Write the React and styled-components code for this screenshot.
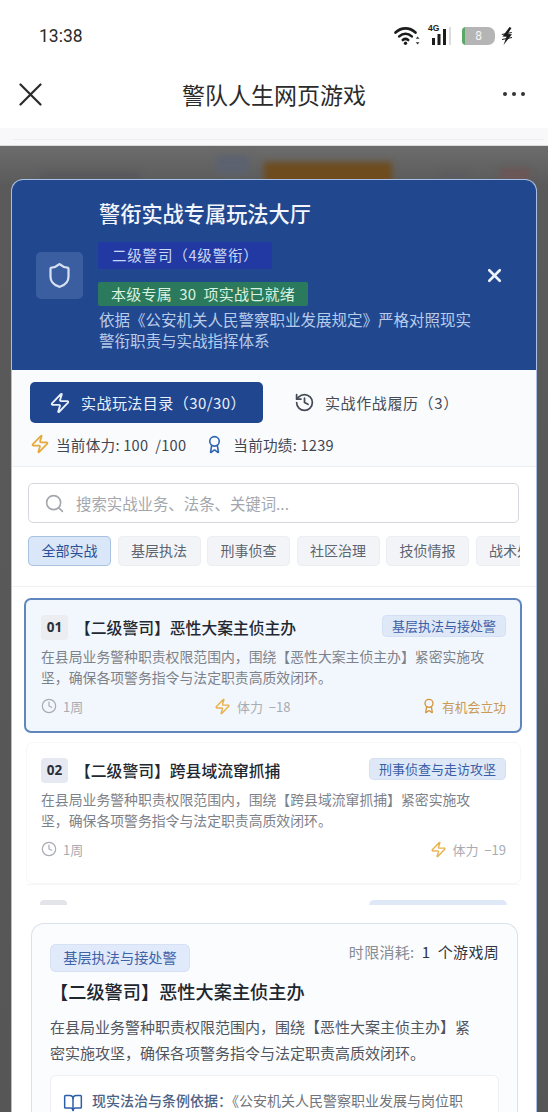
import React from "react";
import styled, { createGlobalStyle } from "styled-components";
import { Zap, History, Award, Search, Clock, BookOpen, Shield, X } from "lucide-react";

const Global = createGlobalStyle`
  html, body { margin: 0; padding: 0; background: #fff; }
  * { box-sizing: border-box; }
  body { font-family: "Noto Sans CJK SC", "Noto Sans", sans-serif; }
`;

const Page = styled.div`
  width: 548px; height: 1112px; overflow: hidden;
  display: flex; flex-direction: column; background: #fff;
`;
const StatusBar = styled.div`
  height: 70px; padding: 1px 34px 0 39px; flex: none; display: flex; align-items: center; justify-content: space-between;
`;
const Time = styled.span`
  font: 400 17.5px "Roboto", "Liberation Sans", sans-serif; color: #2a2a2a;
`;
const StatusIcons = styled.div`display: flex; align-items: center;`;
const NavBar = styled.div`
  height: 58px; flex: none; display: flex; align-items: center; justify-content: space-between;
  padding: 0 23px 10px 19px; position: relative;
`;
const NavTitle = styled.div`
  position: absolute; left: 0; right: 0; top: 8px; text-align: center;
  font-size: 23px; line-height: 32px; color: #2b2b2b;
`;
const Dots = styled.div`display: flex; gap: 5px;`;
const Dot = styled.i`width: 4px; height: 4px; border-radius: 50%; background: #333;`;
const Strip = styled.div`
  height: 18px; flex: none; background: #f8f8fa; border-bottom: 1px solid #dcdcdc;
  display: flex; align-items: flex-end; padding: 0 4px 5px 13px;
`;
const StripLine = styled.div`height: 1px; flex: 1; background: #eeeef1;`;
const Backdrop = styled.div`
  flex: 1; min-height: 0; background: linear-gradient(#6c6c6c, #5a5a5a 40px, #565656); padding: 34px 12px 0; position: relative; overflow: hidden;
  display: flex;
`;
const Blob = styled.div`
  position: absolute; top: ${p => p.$top}px; left: ${p => p.$left}px;
  width: ${p => p.$w}px; height: ${p => p.$h}px; background: ${p => p.$c}; filter: blur(3px);
`;
const Modal = styled.div`
  position: relative; flex: 1; display: flex; flex-direction: column; min-height: 0;
  background: #fff; border-radius: 11px 11px 0 0; overflow: hidden;
  box-shadow: 0 0 0 1px #a9c0e6;
`;
const Header = styled.header`
  height: 190px; flex: none; background: #21488f; color: #fff;
  display: flex; align-items: flex-start; padding: 18px 26px 0 24px; position: relative;
`;
const ShieldBox = styled.div`
  width: 47px; height: 47px; margin-top: 54px; flex: none; border-radius: 5px;
  background: #3a5e9f; display: flex; align-items: center; justify-content: center;
  color: #d6e0f2;
`;
const HeaderBody = styled.div`
  margin-left: 15px; flex: 1; min-width: 0; display: flex; flex-direction: column; align-items: flex-start;
`;
const HeaderTitle = styled.h1`
  margin: 0 0 15px; padding-left: 1px; font-size: 21.2px; line-height: 29px; font-weight: 500; color: #f2f5fb; white-space: nowrap;
`;
const RankBadge = styled.div`
  height: 27px; width: 174px; padding-left: 14px; border-radius: 2px; background: #2239a3;
  font-size: 14.5px; letter-spacing: .8px; line-height: 26px; color: #c9d6f5; white-space: nowrap;
`;
const ReadyBadge = styled.div`
  margin-top: 13px; height: 24px; padding: 0 13px; width: 210px; border-radius: 2px; background: #2b7a5d;
  font-size: 15px; letter-spacing: .25px; line-height: 24px; color: #d8f2df; white-space: pre;
`;
const HeaderDesc = styled.p`
  margin: 3px 0 0 1px; font-size: 15.5px; line-height: 21px; color: #b9cbea; white-space: pre;
`;
const CloseBtn = styled.div`
  position: absolute; right: 31px; top: 85px; color: #eef2fa; display: flex;
`;
const TabArea = styled.div`
  height: 97px; flex: none; background: #fafbfd; border-bottom: 1px solid #eceef2;
  padding: 12px 18px 0;
`;
const Tabs = styled.div`display: flex; align-items: center;`;
const ActiveTab = styled.div`
  width: 233px; height: 41px; border-radius: 5px; background: #1f468f; color: #eaf0fa;
  display: flex; align-items: center; padding-left: 19px; gap: 10px;
  font-size: 15px; letter-spacing: .45px; white-space: nowrap;
`;
const PlainTab = styled.div`
  margin-left: 31px; display: flex; align-items: center; gap: 10px; color: #454c58; font-size: 15px; letter-spacing: .6px; white-space: nowrap;
`;
const Stats = styled.div`
  margin-top: 9px; display: flex; align-items: center; height: 24px; color: #3f4651; font-size: 14.6px; letter-spacing: .25px;
`;
const Stat = styled.span`
  display: flex; align-items: center; gap: ${p => p.$gap}px; margin-right: ${p => p.$mr || 0}px; white-space: pre;
`;
const Filter = styled.div`
  height: 120px; flex: none; background: #fff; border-bottom: 1px solid #eff1f4;
  padding: 16px 16px 0;
`;
const SearchBox = styled.div`
  width: 491px; height: 40px; border: 1.5px solid #d5d8dd; border-radius: 5px;
  display: flex; align-items: center; padding-left: 15px; gap: 11px; color: #a3a7ad; font-size: 15.4px;
`;
const Chips = styled.div`
  margin-top: 13px; width: 492px; overflow: hidden; display: flex; gap: 6.5px;
`;
const Chip = styled.div`
  flex: none; width: 83px; height: 30px; border-radius: 5px; text-align: center;
  font-size: 14px; line-height: 29px;
  color: ${p => p.$on ? "#2a5197" : "#5b6470"};
  background: ${p => p.$on ? "#d9e7f8" : "#f3f4f7"};
  box-shadow: inset 0 0 0 1px ${p => p.$on ? "#a9c2e2" : "#eceef2"};
`;
const List = styled.div`
  flex: 1; min-height: 0; overflow: hidden; padding: 11px 14px 0 12px; background: #fff;
`;
const Card = styled.article`
  margin: ${p => p.$sel ? "0 0 9px" : "0 1px 0 2px"};
  height: ${p => p.$sel ? 135 : 142}px;
  padding: ${p => p.$sel ? "15px 14px 0 15px" : "15px 14px 0 14px"};
  border-radius: 7px;
  background: ${p => p.$sel ? "#f2f7fd" : "#fff"};
  border: ${p => p.$sel ? "2px solid #5f87bd" : "1px solid #f6f7f9"};
`;
const CardHead = styled.div`display: flex; align-items: flex-start;`;
const Num = styled.div`
  width: 27px; height: 25px; flex: none; border-radius: 4px; background: ${p => p.$sel ? "#ecedf1" : "#e6e9f2"};
  text-align: center; font: 700 13.5px/25px "Noto Sans", sans-serif; color: #29303a;
`;
const CardTitle = styled.h3`
  margin: 0 0 0 7px; flex: 1; font-size: 15.8px; line-height: 25px; font-weight: 500; color: #222831; white-space: nowrap;
`;
const Tag = styled.div`
  flex: none; height: 22px; padding: 0 10px; border-radius: 5px;
  background: #dfe8f7; color: #3a5ea6; font-size: 13px; line-height: 21px;
  box-shadow: inset 0 0 0 1px #d5e0f2;
`;
const CardDesc = styled.p`
  margin: 6px 0 0; font-size: 13.85px; line-height: 21px; color: #7d828a; height: 42px; white-space: pre;
`;
const CardFoot = styled.div`
  margin-top: 8px; display: flex; align-items: center; justify-content: space-between; height: 20px;
  font-size: 13px; color: #a8abb1;
`;
const Meta = styled.span`display: flex; align-items: center; gap: ${p => p.$gap || 6}px; color: ${p => p.$c || "#a8abb1"}; white-space: pre;`;
const AwardText = styled.span`font-size: 12.8px;`;
const PeekCard = styled.div`
  margin: 0 1px 0 2px; height: 60px; padding: 15px 14px 0 14px; border-top: 1px solid #f6f7f9;
  display: flex; justify-content: space-between;
`;
const PeekNum = styled.div`width: 27px; height: 25px; background: #e2e4ea; border-radius: 4px;`;
const PeekTag = styled.div`width: 138px; height: 22px; background: #dfe8f7; border-radius: 5px;`;
const DetailWrap = styled.div`
  height: 207px; flex: none; position: relative; background: #fff; padding: 18px 18px 0 19px;
`;
const Detail = styled.section`
  height: 200px; border: 1.5px solid #d9e1ea; border-radius: 13px 13px 0 0; border-bottom: 0; background: #fbfcfe;
  padding: 20px 18px 0 18px;
`;
const DetailHead = styled.div`display: flex; justify-content: space-between; align-items: flex-start;`;
const DetailTag = styled.div`
  width: 140px; height: 28px; border-radius: 6px; background: #e1eafa; text-align: center;
  color: #3f63a8; font-size: 14.2px; line-height: 27px; box-shadow: inset 0 0 0 1px #d6e1f3;
`;
const Duration = styled.div`
  font-size: 15px; letter-spacing: .3px; line-height: 15px; color: #878c93; white-space: pre;
  b { font-weight: 400; color: #2f353e; }
`;
const DetailTitle = styled.h2`
  margin: 4px 0 0; font-size: 18.2px; line-height: 30px; font-weight: 500; color: #20262e; white-space: nowrap;
`;
const DetailDesc = styled.p`
  margin: 8px 0 0; font-size: 15px; line-height: 26px; color: #50565f; white-space: pre;
`;
const LawBox = styled.div`
  margin-top: 9px; height: 60px; border: 1px solid #eef0f4; border-radius: 6px; background: #fff;
  display: flex; align-items: flex-start; padding: 14px 0 0 12px; gap: 9px;
  font-size: 14px; line-height: 20px; color: #6f747c; white-space: pre;
  b { font-weight: 500; color: #4c6285; }
`;
const SignalWrap = styled.div`position: relative; width: 27px; height: 20px; margin-left: 7px;`;
const SignalText = styled.span`
  position: absolute; left: 0; top: -3px; font: 700 8.5px/10px "Liberation Sans", sans-serif; color: #1c1c1c;
`;
const Battery = styled.div`
  margin-left: 7px; width: 33px; height: 18px; border-radius: 4px 7px 7px 4px;
  background: linear-gradient(90deg, #5aa866 0 3px, #b5b5b5 3px); color: #f4f4f4;
  font: 400 12px/18px "Roboto", sans-serif; text-align: center;
`;

const WifiIcon = () => (
  <svg width="26" height="20" viewBox="0 0 26 20" fill="none" stroke="#1c1c1c" strokeWidth="2.6" strokeLinecap="round" style={{ marginRight: 1 }}>
    <path d="M1.5 6.5C7.5 1 15.5 1 21.5 6.5" />
    <path d="M5.2 10.4c3.8-3.4 8.8-3.4 12.6 0" />
    <path d="M8.8 14c1.6-1.3 3.8-1.3 5.4 0" />
    <circle cx="11.5" cy="17.2" r="1.7" fill="#1c1c1c" stroke="none" />
    <path d="M23.6 10.5l-1.9 2.3h3.8zM23.6 18.5l-1.9-2.3h3.8z" fill="#333" stroke="none" />
  </svg>
);
const SignalIcon = () => (
  <SignalWrap>
    <SignalText>4G</SignalText>
    <svg width="27" height="20" viewBox="0 0 27 20">
      <rect x="4" y="12" width="3" height="7" fill="#1c1c1c" />
      <rect x="9.5" y="8" width="3" height="11" fill="#1c1c1c" />
      <rect x="15" y="3" width="3" height="16" fill="#1c1c1c" />
      <rect x="21" y="1" width="2" height="18" fill="#dcdcdc" />
    </svg>
  </SignalWrap>
);
const BoltIcon = () => (
  <svg width="14" height="20" viewBox="0 0 14 20" style={{ marginLeft: 5 }}>
    <path d="M9.5 1L2.5 10.5l4 .2L3.5 19l8.5-10.8-4.3-.1L11.5 2z" fill="#1c1c1c" />
    <path d="M1.8 8.5l10-2M2 13.5l10-2" stroke="#1c1c1c" strokeWidth="1" />
  </svg>
);
const NavClose = () => (
  <svg width="23" height="23" viewBox="0 0 23 23" fill="none" stroke="#2a2a2a" strokeWidth="2.2" strokeLinecap="round">
    <path d="M1.5 1.5l20 20M21.5 1.5l-20 20" />
  </svg>
);

const descA = "在县局业务警种职责权限范围内，围绕【恶性大案主侦主办】紧密实施攻\n坚，确保各项警务指令与法定职责高质效闭环。";
const descB = "在县局业务警种职责权限范围内，围绕【跨县域流窜抓捕】紧密实施攻\n坚，确保各项警务指令与法定职责高质效闭环。";

export default function App() {
  return (
    <Page>
      <Global />
      <StatusBar>
        <Time>13:38</Time>
        <StatusIcons>
          <WifiIcon />
          <SignalIcon />
          <Battery>8</Battery>
          <BoltIcon />
        </StatusIcons>
      </StatusBar>
      <NavBar>
        <NavClose />
        <NavTitle>警队人生网页游戏</NavTitle>
        <Dots><Dot /><Dot /><Dot /></Dots>
      </NavBar>
      <Strip><StripLine /></Strip>
      <Backdrop>
        <Blob $top={16} $left={264} $w={128} $h={30} $c="#6e4c1e" />
        <Blob $top={10} $left={217} $w={32} $h={18} $c="#5b6270" />
        <Blob $top={26} $left={40} $w={100} $h={10} $c="#58585c" />
        <Blob $top={26} $left={440} $w={30} $h={10} $c="#5c5c60" />
        <Blob $top={22} $left={500} $w={30} $h={14} $c="#6b5656" />
        <Modal>
          <Header>
            <ShieldBox><Shield size={27} strokeWidth={2} /></ShieldBox>
            <HeaderBody>
              <HeaderTitle>警衔实战专属玩法大厅</HeaderTitle>
              <RankBadge>二级警司（4级警衔）</RankBadge>
              <ReadyBadge>本级专属  30  项实战已就绪</ReadyBadge>
              <HeaderDesc>{"依据《公安机关人民警察职业发展规定》严格对照现实\n警衔职责与实战指挥体系"}</HeaderDesc>
            </HeaderBody>
            <CloseBtn><X size={21} strokeWidth={3} /></CloseBtn>
          </Header>
          <TabArea>
            <Tabs>
              <ActiveTab><Zap size={22} strokeWidth={2} />实战玩法目录（30/30）</ActiveTab>
              <PlainTab><History size={21} strokeWidth={2} />实战作战履历（3）</PlainTab>
            </Tabs>
            <Stats>
              <Stat $gap={6} $mr={19}><Zap size={20} strokeWidth={2} color="#e5a83a" />当前体力: 100  /100</Stat>
              <Stat $gap={9}><Award size={19} strokeWidth={2} color="#2c62b0" />当前功绩: 1239</Stat>
            </Stats>
          </TabArea>
          <Filter>
            <SearchBox><Search size={21} strokeWidth={1.8} />搜索实战业务、法条、关键词...</SearchBox>
            <Chips>
              <Chip $on>全部实战</Chip>
              <Chip>基层执法</Chip>
              <Chip>刑事侦查</Chip>
              <Chip>社区治理</Chip>
              <Chip>技侦情报</Chip>
              <Chip>战术处置</Chip>
            </Chips>
          </Filter>
          <List>
            <Card $sel>
              <CardHead>
                <Num $sel>01</Num>
                <CardTitle>【二级警司】恶性大案主侦主办</CardTitle>
                <Tag>基层执法与接处警</Tag>
              </CardHead>
              <CardDesc>{descA}</CardDesc>
              <CardFoot>
                <Meta><Clock size={16} strokeWidth={1.8} />1周</Meta>
                <Meta><Zap size={17} strokeWidth={2} color="#e8b04a" />体力  −18</Meta>
                <Meta $gap={5} $c="#c99a55"><Award size={16} strokeWidth={2} color="#d5953a" /><AwardText>有机会立功</AwardText></Meta>
              </CardFoot>
            </Card>
            <Card>
              <CardHead>
                <Num>02</Num>
                <CardTitle>【二级警司】跨县域流窜抓捕</CardTitle>
                <Tag>刑事侦查与走访攻坚</Tag>
              </CardHead>
              <CardDesc>{descB}</CardDesc>
              <CardFoot>
                <Meta><Clock size={16} strokeWidth={1.8} />1周</Meta>
                <Meta><Zap size={17} strokeWidth={2} color="#e8b04a" />体力  −19</Meta>
              </CardFoot>
            </Card>
            <PeekCard><PeekNum /><PeekTag /></PeekCard>
          </List>
          <DetailWrap>
            <Detail>
              <DetailHead>
                <DetailTag>基层执法与接处警</DetailTag>
                <Duration>时限消耗:  <b>1  个游戏周</b></Duration>
              </DetailHead>
              <DetailTitle>【二级警司】恶性大案主侦主办</DetailTitle>
              <DetailDesc>{"在县局业务警种职责权限范围内，围绕【恶性大案主侦主办】紧\n密实施攻坚，确保各项警务指令与法定职责高质效闭环。"}</DetailDesc>
              <LawBox>
                <BookOpen size={20} strokeWidth={1.8} color="#2f5ea8" style={{ marginTop: 3 }} />
                <span><b>现实法治与条例依据：</b>《公安机关人民警察职业发展与岗位职</span>
              </LawBox>
            </Detail>
          </DetailWrap>
        </Modal>
      </Backdrop>
    </Page>
  );
}
